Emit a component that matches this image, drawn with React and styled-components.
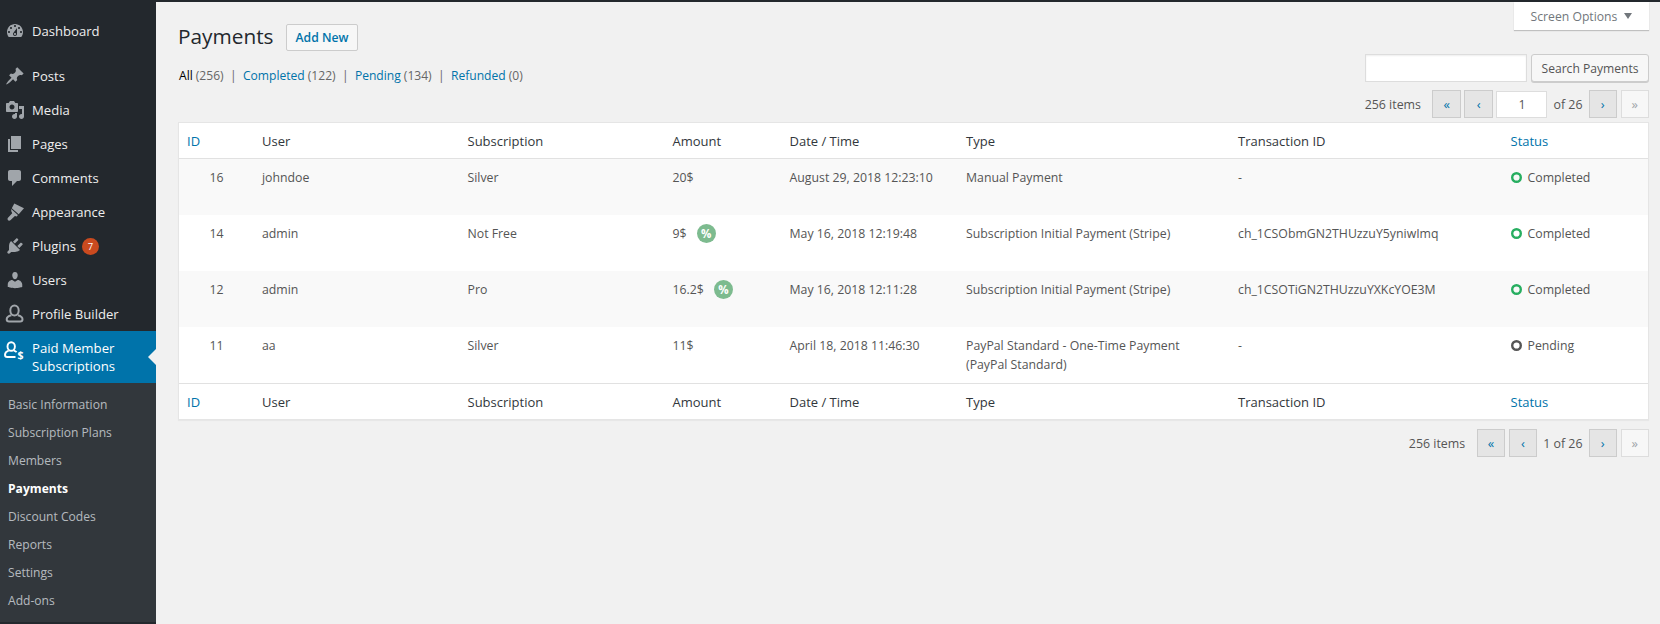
import React from 'react'
import styled, { createGlobalStyle } from 'styled-components'

const GlobalStyle = createGlobalStyle`
  html, body {
    margin: 0;
    padding: 0;
    background: #f1f1f1;
  }
  body {
    font-family: "Open Sans", "Noto Sans", sans-serif;
    font-size: 12.2px;
    color: #444;
  }
`

const Page = styled.div`
  display: flex;
  height: 624px;
  overflow: hidden;
  border-top: 2px solid #23282d;
  box-sizing: border-box;
`

const Sidebar = styled.nav`
  width: 156px;
  flex-shrink: 0;
  background: #23282d;
  padding-top: 12px;
  box-sizing: border-box;
`

const MenuItem = styled.div`
  display: flex;
  align-items: center;
  height: 34px;
  margin-bottom: ${({ $gap }) => $gap || 0}px;
  padding-left: 5px;
  color: #eee;
  font-size: 13.1px;
  gap: 7px;
`

const ActiveItem = styled.div`
  position: relative;
  display: flex;
  align-items: center;
  height: 52px;
  padding-left: 4px;
  gap: 8px;
  background: #0073aa;
  color: #fff;
  font-size: 13.2px;
  line-height: 18px;

  svg {
    align-self: flex-start;
    margin-top: 10px;
  }

  &::after {
    content: '';
    position: absolute;
    right: 0;
    top: 50%;
    margin-top: -8px;
    border: 8px solid transparent;
    border-right-color: #f1f1f1;
    border-left-width: 0;
  }
`

const MenuIcon = styled.svg`
  width: 20px;
  height: 20px;
  flex-shrink: 0;
  overflow: visible;
  fill: ${({ $active }) => ($active ? '#fff' : '#a0a5aa')};
`

const Badge = styled.span`
  display: inline-flex;
  align-items: center;
  justify-content: center;
  width: 17px;
  height: 17px;
  margin-left: 6px;
  border-radius: 50%;
  background: #ca4a1f;
  color: #fff;
  font-size: 9.5px;
  vertical-align: 1px;
`

const SubMenu = styled.div`
  background: #32373c;
  padding: 8px 0 0;
  height: 239px;
  box-sizing: border-box;
`

const SubItem = styled.div`
  height: 28px;
  line-height: 28px;
  padding-left: 8px;
  font-size: 12.1px;
  color: ${({ $current }) => ($current ? '#fff' : 'rgba(240, 245, 250, 0.7)')};
  font-weight: ${({ $current }) => ($current ? 700 : 400)};
`

const Main = styled.main`
  flex: 1;
  padding: 0 11px 0 22px;
  min-width: 0;
`

const Head = styled.header`
  display: flex;
  justify-content: space-between;
  height: 120px;
`

const HeadLeft = styled.div`
  padding-top: 22px;
`

const TitleRow = styled.div`
  display: flex;
  align-items: flex-start;
  gap: 12px;
`

const Title = styled.h1`
  margin: 0;
  font-size: 20.8px;
  font-weight: 400;
  line-height: 24px;
  color: #23282d;
`

const AddNew = styled.a`
  display: block;
  padding: 0 9px;
  height: 27px;
  line-height: 25px;
  border: 1px solid #ccc;
  border-radius: 2px;
  background: #f7f7f7;
  color: #0073aa;
  font-size: 12.2px;
  font-weight: 600;
  box-sizing: border-box;
`

const Filters = styled.div`
  display: flex;
  margin: 16px 0 0 1px;
  font-size: 12.1px;
  line-height: 18px;
  color: #666;
`

const FilterSep = styled.span`
  margin: 0 6.3px;
  color: #666;
`

const FilterLink = styled.span`
  color: ${({ $current }) => ($current ? '#000' : '#0073aa')};
  margin-right: 3px;
`

const HeadRight = styled.div`
  display: flex;
  flex-direction: column;
  align-items: flex-end;
`

const ScreenOptions = styled.div`
  display: flex;
  align-items: center;
  justify-content: center;
  gap: 7px;
  width: 135px;
  height: 28px;
  background: #fff;
  color: #72777c;
  font-size: 12.2px;
  box-shadow: 0 1px 1px rgba(0, 0, 0, 0.2);
  box-sizing: border-box;
`

const Caret = styled.span`
  width: 0;
  height: 0;
  border: 4.5px solid transparent;
  border-top: 6px solid #72777c;
  border-bottom: 0;
`

const SearchRow = styled.div`
  display: flex;
  gap: 4px;
  margin-top: 24px;
`

const SearchInput = styled.input`
  width: 162px;
  height: 28px;
  border: 1px solid #ddd;
  background: #fff;
  padding: 0;
  box-sizing: border-box;
  box-shadow: inset 0 1px 2px rgba(0, 0, 0, 0.07);
`

const SearchButton = styled.button`
  width: 118px;
  height: 28px;
  padding: 0;
  border: 1px solid #ccc;
  border-radius: 3px;
  background: #f7f7f7;
  box-shadow: 0 1px 0 #ccc;
  color: #555;
  font: 12.1px "Open Sans", sans-serif;
`

const Pager = styled.div`
  display: flex;
  align-items: center;
  height: 28px;
  margin-top: ${({ $top }) => $top || 0}px;
  gap: 3.5px;
  font-size: 12.4px;
  color: #555;
`

const PagerCount = styled.span`
  margin-right: 8px;
`

const PagerText = styled.span`
  margin: 0 2.5px;
`

const PageButton = styled.span`
  display: flex;
  align-items: center;
  justify-content: center;
  width: 28.5px;
  height: 28px;
  border: 1px solid ${({ $disabled }) => ($disabled ? '#ddd' : '#ccc')};
  background: ${({ $disabled }) => ($disabled ? '#f7f7f7' : '#e5e5e5')};
  color: ${({ $disabled }) => ($disabled ? '#a0a5aa' : '#0073aa')};
  font-size: 13px;
  box-sizing: border-box;
`

const PageInput = styled.span`
  width: 51px;
  height: 27px;
  line-height: 25px;
  text-align: center;
  border: 1px solid #ddd;
  background: #fff;
  box-sizing: border-box;
`

const Table = styled.table`
  width: 100%;
  table-layout: fixed;
  border-collapse: separate;
  border-spacing: 0;
  background: #fff;
  border: 1px solid #e5e5e5;
  box-shadow: 0 1px 1px rgba(0, 0, 0, 0.04);
  box-sizing: border-box;
`

const HeadCell = styled.th`
  height: 36px;
  padding: ${({ $foot }) => ($foot ? 0 : 1)}px 8px 0;
  text-align: left;
  font-weight: 400;
  font-size: 13px;
  box-sizing: border-box;
  color: ${({ $link }) => ($link ? '#0073aa' : '#32373c')};
  border-${({ $foot }) => ($foot ? 'top' : 'bottom')}: 1px solid #e1e1e1;
`

const Row = styled.tr`
  background: ${({ $odd }) => ($odd ? '#f9f9f9' : '#fff')};
`

const Cell = styled.td`
  height: 56px;
  padding: 9px ${({ $inset }) => $inset || 8}px 0 8px;
  vertical-align: top;
  font-size: 12.3px;
  line-height: 19px;
  color: #555;
  box-sizing: border-box;
  text-align: ${({ $center }) => ($center ? 'center' : 'left')};
`

const Discount = styled.span`
  display: inline-flex;
  align-items: center;
  justify-content: center;
  width: 19px;
  height: 19px;
  margin-left: 10px;
  border-radius: 50%;
  background: #7dbb8f;
  color: #fff;
  font-size: 11.5px;
  font-weight: 700;
`

const Status = styled.span`
  display: flex;
  align-items: center;
  gap: 6px;
`

const StatusDot = styled.svg`
  width: 11px;
  height: 11px;
  flex-shrink: 0;
  fill: none;
  stroke: ${({ $color }) => $color};
  stroke-width: 2.4;
`

const Footer = styled.div`
  display: flex;
  justify-content: flex-end;
  margin-top: 9px;
`

const Glyph = ({ children, active }) => (
  <MenuIcon viewBox="0 0 20 20" $active={active}>{children}</MenuIcon>
)

const icons = {
  dashboard: <path fillRule="evenodd" d="M3.76 16h12.48c1.1-1.37 1.76-3.11 1.76-5 0-4.42-3.58-8-8-8s-8 3.58-8 8c0 1.89.66 3.63 1.76 5zM10 4c.55 0 1 .45 1 1s-.45 1-1 1-1-.45-1-1 .45-1 1-1zM6 6c.55 0 1 .45 1 1s-.45 1-1 1-1-.45-1-1 .45-1 1-1zm8 0c.55 0 1 .45 1 1s-.45 1-1 1-1-.45-1-1 .45-1 1-1zm-5.37 5.55L12 7v6c0 1.1-.9 2-2 2s-2-.9-2-2c0-.57.24-1.08.63-1.45zM4 10c.55 0 1 .45 1 1s-.45 1-1 1-1-.45-1-1 .45-1 1-1zm12 0c.55 0 1 .45 1 1s-.45 1-1 1-1-.45-1-1 .45-1 1-1zm-5 3c0-.55-.45-1-1-1s-1 .45-1 1 .45 1 1 1 1-.45 1-1z" />,
  posts: <path d="M10.44 3.02l1.82-1.82 6.36 6.35-1.83 1.82c-1.05-.68-2.48-.57-3.41.36l-.75.75c-.92.93-1.04 2.35-.35 3.41l-1.83 1.82-2.41-2.41-2.8 2.79c-.42.42-3.38 2.71-3.8 2.29s1.86-3.39 2.28-3.81l2.79-2.79L4.1 9.36l1.83-1.82c1.05.69 2.48.57 3.4-.36l.75-.75c.93-.92 1.05-2.35.36-3.41z" />,
  media: <path fillRule="evenodd" d="M13 11V4c0-.55-.45-1-1-1h-1.67L9 1H5L3.67 3H2c-.55 0-1 .45-1 1v7c0 .55.45 1 1 1h10c.55 0 1-.45 1-1zM7 4.5c1.38 0 2.5 1.12 2.5 2.5S8.38 9.5 7 9.5 4.5 8.38 4.5 7 5.62 4.5 7 4.5zM14 6h5v10.5c0 1.38-1.12 2.5-2.5 2.5S14 17.88 14 16.5s1.12-2.5 2.5-2.5c.17 0 .34.02.5.05V9h-3V6zm-4 8.05V13h2v3.5c0 1.38-1.12 2.5-2.5 2.5S7 17.88 7 16.5 8.12 14 9.5 14c.17 0 .34.02.5.05z" />,
  pages: <path d="M6 15V2h10v13H6zm-1 1h8v2H3V5h2v11z" />,
  comments: <path d="M5 2h9c1.1 0 2 .9 2 2v7c0 1.1-.9 2-2 2h-2l-5 5v-5H5c-1.1 0-2-.9-2-2V4c0-1.1.9-2 2-2z" />,
  appearance: (
    <>
      <path d="M9.3 1.5L19 6.3l-5.3 6-6.9-6.1z" />
      <path d="M6.2 7.1l6.7 6-1.1 1.3-1.9-.5-4.5 4.3c-.7.6-1.8.6-2.4 0-.6-.7-.6-1.7 0-2.4l4.2-4.6-.9-1.9z" />
    </>
  ),
  plugins: <path d="M13.11 4.36L9.87 7.6 8 5.73l3.24-3.24c.35-.34 1.05-.2 1.56.32.52.51.66 1.21.31 1.55zm-8 1.77l.91-1.12 9.01 9.01-1.19.84c-.71.71-2.63 1.16-3.82 1.16H6.14L4.9 17.26c-.59.59-1.54.59-2.12 0-.59-.58-.59-1.53 0-2.12l1.24-1.24v-3.88c0-1.13.4-3.19 1.09-3.89zm7.26 3.97l3.24-3.24c.34-.35 1.04-.21 1.55.31.52.51.66 1.21.31 1.55l-3.24 3.25z" />,
  users: <path d="M10 9.25c-2.27 0-2.73-3.44-2.73-3.44C7 4.02 7.82 2 9.97 2c2.16 0 2.98 2.02 2.71 3.81 0 0-.41 3.44-2.68 3.44zm0 2.57L12.72 10c2.39 0 4.52 2.33 4.52 4.53v2.49s-3.65 1.13-7.24 1.13c-3.65 0-7.24-1.13-7.24-1.13v-2.49c0-2.25 1.94-4.48 4.47-4.48z" />,
  profile: (
    <g fill="none" stroke="#a0a5aa" strokeWidth="2">
      <ellipse cx="9.5" cy="6.5" rx="4.2" ry="5" />
      <path d="M6.4 11.2c-2.6.6-4.7 2-4.7 4 0 1.5.9 2.3 2.4 2.3h11c1.5 0 2.4-.8 2.4-2.3 0-2-2.1-3.4-4.7-4" />
    </g>
  ),
}

const paidIcon = (
  <>
    <g fill="none" stroke="#fff" strokeWidth="1.9">
      <ellipse cx="7.2" cy="5.5" rx="3.7" ry="4.3" />
      <path d="M4.6 9.6C2.4 10.4 1 11.6 1 13.7c0 1.4.8 2.3 2.2 2.3h8.3" />
      <path d="M9.8 9.6c1.1.3 2.1.8 2.8 1.5" />
    </g>
    <text x="13.5" y="17.5" fill="#fff" fontSize="10.5" fontWeight="700" fontFamily="Open Sans, sans-serif">$</text>
  </>
)

const menu = [
  { label: 'Dashboard', icon: 'dashboard', gap: 11 },
  { label: 'Posts', icon: 'posts' },
  { label: 'Media', icon: 'media' },
  { label: 'Pages', icon: 'pages' },
  { label: 'Comments', icon: 'comments' },
  { label: 'Appearance', icon: 'appearance' },
  { label: 'Plugins', icon: 'plugins', badge: 7 },
  { label: 'Users', icon: 'users' },
  { label: 'Profile Builder', icon: 'profile' },
]

const subMenu = ['Basic Information', 'Subscription Plans', 'Members', 'Payments', 'Discount Codes', 'Reports', 'Settings', 'Add-ons']

const columns = [
  { label: 'ID', width: 75, link: true },
  { label: 'User', width: 205.5 },
  { label: 'Subscription', width: 205 },
  { label: 'Amount', width: 117 },
  { label: 'Date / Time', width: 176.5 },
  { label: 'Type', width: 272 },
  { label: 'Transaction ID', width: 272.5 },
  { label: 'Status', link: true },
]

const rows = [
  { id: 16, user: 'johndoe', plan: 'Silver', amount: '20$', date: 'August 29, 2018 12:23:10', type: 'Manual Payment', tx: '-', status: 'Completed' },
  { id: 14, user: 'admin', plan: 'Not Free', amount: '9$', discount: true, date: 'May 16, 2018 12:19:48', type: 'Subscription Initial Payment (Stripe)', tx: 'ch_1CSObmGN2THUzzuY5yniwImq', status: 'Completed' },
  { id: 12, user: 'admin', plan: 'Pro', amount: '16.2$', discount: true, date: 'May 16, 2018 12:11:28', type: 'Subscription Initial Payment (Stripe)', tx: 'ch_1CSOTiGN2THUzzuYXKcYOE3M', status: 'Completed' },
  { id: 11, user: 'aa', plan: 'Silver', amount: '11$', date: 'April 18, 2018 11:46:30', type: 'PayPal Standard - One-Time Payment (PayPal Standard)', tx: '-', status: 'Pending' },
]

const App = () => {
  return (
    <>
      <GlobalStyle />
      <Page>
        <Sidebar>
          {menu.map((item) => (
            <MenuItem key={item.label} $gap={item.gap}>
              <Glyph>{icons[item.icon]}</Glyph>
              <span>
                {item.label}
                {item.badge && <Badge>{item.badge}</Badge>}
              </span>
            </MenuItem>
          ))}
          <ActiveItem>
            <Glyph active>{paidIcon}</Glyph>
            <span>Paid Member Subscriptions</span>
          </ActiveItem>
          <SubMenu>
            {subMenu.map((item) => (
              <SubItem key={item} $current={item === 'Payments'}>{item}</SubItem>
            ))}
          </SubMenu>
        </Sidebar>
        <Main>
          <Head>
            <HeadLeft>
              <TitleRow>
                <Title>Payments</Title>
                <AddNew>Add New</AddNew>
              </TitleRow>
              <Filters>
                <FilterLink $current>All</FilterLink> (256)
                <FilterSep>|</FilterSep>
                <FilterLink>Completed</FilterLink> (122)
                <FilterSep>|</FilterSep>
                <FilterLink>Pending</FilterLink> (134)
                <FilterSep>|</FilterSep>
                <FilterLink>Refunded</FilterLink> (0)
              </Filters>
            </HeadLeft>
            <HeadRight>
              <ScreenOptions>Screen Options <Caret /></ScreenOptions>
              <SearchRow>
                <SearchInput />
                <SearchButton>Search Payments</SearchButton>
              </SearchRow>
              <Pager $top={8}>
                <PagerCount>256 items</PagerCount>
                <PageButton>«</PageButton>
                <PageButton>‹</PageButton>
                <PageInput>1</PageInput>
                <PagerText>of 26</PagerText>
                <PageButton>›</PageButton>
                <PageButton $disabled>»</PageButton>
              </Pager>
            </HeadRight>
          </Head>
          <Table>
            <colgroup>
              {columns.map((col) => <col key={col.label} style={{ width: col.width }} />)}
            </colgroup>
            <thead>
              <tr>
                {columns.map((col) => <HeadCell key={col.label} $link={col.link}>{col.label}</HeadCell>)}
              </tr>
            </thead>
            <tbody>
              {rows.map((row, i) => (
                <Row key={row.id} $odd={i % 2 === 0}>
                  <Cell $center>{row.id}</Cell>
                  <Cell>{row.user}</Cell>
                  <Cell>{row.plan}</Cell>
                  <Cell>
                    {row.amount}
                    {row.discount && <Discount>%</Discount>}
                  </Cell>
                  <Cell>{row.date}</Cell>
                  <Cell $inset={24}>{row.type}</Cell>
                  <Cell>{row.tx}</Cell>
                  <Cell>
                    <Status>
                      <StatusDot viewBox="0 0 11 11" $color={row.status === 'Pending' ? '#555' : '#27ae60'}>
                        <circle cx="5.5" cy="5.5" r="4.3" />
                      </StatusDot>
                      {row.status}
                    </Status>
                  </Cell>
                </Row>
              ))}
            </tbody>
            <tfoot>
              <tr>
                {columns.map((col) => <HeadCell key={col.label} $link={col.link} $foot>{col.label}</HeadCell>)}
              </tr>
            </tfoot>
          </Table>
          <Footer>
            <Pager>
              <PagerCount>256 items</PagerCount>
              <PageButton>«</PageButton>
              <PageButton>‹</PageButton>
              <PagerText>1 of 26</PagerText>
              <PageButton>›</PageButton>
              <PageButton $disabled>»</PageButton>
            </Pager>
          </Footer>
        </Main>
      </Page>
    </>
  )
}

export default App
